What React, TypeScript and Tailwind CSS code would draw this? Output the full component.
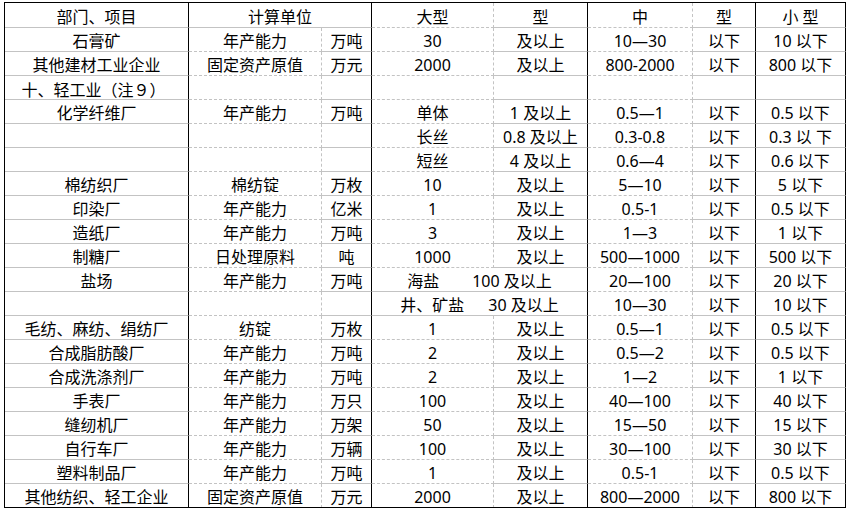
type Cell = { text: string; span?: number; gap?: string; cjk?: boolean };

// column right-border style: true = solid black, false = dashed gray
const solidRight = [true, false, true, false, true, false, true, true];

const header: Cell[] = [
  { text: '部门、项目' },
  { text: '计算单位', span: 2 },
  { text: '大型' },
  { text: '型' },
  { text: '中' },
  { text: '型' },
  { text: '小 型' },
];

const rows: (string | Cell)[][] = [
  ['石膏矿', '年产能力', '万吨', '30', '及以上', '10—30', '以下', '10 以下'],
  ['其他建材工业企业', '固定资产原值', '万元', '2000', '及以上', '800-2000', '以下', '800 以下'],
  [{ text: '十、轻工业（注９）', cjk: true }, '', '', '', '', '', '', ''],
  ['化学纤维厂', '年产能力', '万吨', '单体', '1 及以上', '0.5—1', '以下', '0.5 以下'],
  ['', '', '', '长丝', '0.8 及以上', '0.3-0.8', '以下', '0.3 以 下'],
  ['', '', '', '短丝', '4 及以上', '0.6—4', '以下', '0.6 以下'],
  ['棉纺织厂', '棉纺锭', '万枚', '10', '及以上', '5—10', '以下', '5 以下'],
  ['印染厂', '年产能力', '亿米', '1', '及以上', '0.5-1', '以下', '0.5 以下'],
  ['造纸厂', '年产能力', '万吨', '3', '及以上', '1—3', '以下', '1 以下'],
  ['制糖厂', '日处理原料', '吨', '1000', '及以上', '500—1000', '以下', '500 以下'],
  ['盐场', '年产能力', '万吨', { text: '海盐|100 及以上', span: 2, gap: 'gap-[33px]' }, '20—100', '以下', '20 以下'],
  ['', '', '', { text: '井、矿盐|30 及以上', span: 2, gap: 'gap-[24px]' }, '10—30', '以下', '10 以下'],
  ['毛纺、麻纺、绢纺厂', '纺锭', '万枚', '1', '及以上', '0.5—1', '以下', '0.5 以下'],
  ['合成脂肪酸厂', '年产能力', '万吨', '2', '及以上', '0.5—2', '以下', '0.5 以下'],
  ['合成洗涤剂厂', '年产能力', '万吨', '2', '及以上', '1—2', '以下', '1 以下'],
  ['手表厂', '年产能力', '万只', '100', '及以上', '40—100', '以下', '40 以下'],
  ['缝纫机厂', '年产能力', '万架', '50', '及以上', '15—50', '以下', '15 以下'],
  ['自行车厂', '年产能力', '万辆', '100', '及以上', '30—100', '以下', '30 以下'],
  ['塑料制品厂', '年产能力', '万吨', '1', '及以上', '0.5-1', '以下', '0.5 以下'],
  ['其他纺织、轻工企业', '固定资产原值', '万元', '2000', '及以上', '800—2000', '以下', '800 以下'],
];

function renderRow(cells: (string | Cell)[], rowIndex: number, tall: boolean) {
  let col = 0;
  return cells.map((c, i) => {
    const cell: Cell = typeof c === 'string' ? { text: c } : c;
    const span = cell.span ?? 1;
    col += span;
    const solid = solidRight[col - 1];
    const parts = cell.text.split('|');
    return (
      <div
        key={`${rowIndex}-${i}`}
        className={`${span === 2 ? 'col-span-2' : ''} ${tall ? 'h-[25px]' : 'h-[24px]'} flex items-center justify-center pt-[3px] whitespace-pre border-b border-dashed border-b-[#c3c3c3] border-r ${
          solid ? 'border-r-black border-solid' : 'border-r-[#c3c3c3]'
        } ${parts.length > 1 ? cell.gap : ''} ${cell.cjk ? "font-['Noto_Sans_CJK_SC',sans-serif] pr-[6px]" : ''}`}
      >
        {parts.map((p, k) => (
          <span key={k}>{p}</span>
        ))}
      </div>
    );
  });
}

export default function App() {
  return (
    <div className="w-[851px] h-[512px] bg-white pt-[2px] pl-[4px] font-['Noto_Sans','Noto_Sans_CJK_SC',sans-serif] text-[16px] text-black leading-none">
      <div className="grid grid-cols-[184px_133px_50px_122px_94px_105px_63px_90px] w-[842px] border-l border-t border-black">
        {renderRow(header, 0, true)}
        {rows.map((r, i) => renderRow(r, i + 1, false))}
        <div className="col-span-8 -mt-[1px] h-[1px] bg-black"></div>
      </div>
    </div>
  );
}
